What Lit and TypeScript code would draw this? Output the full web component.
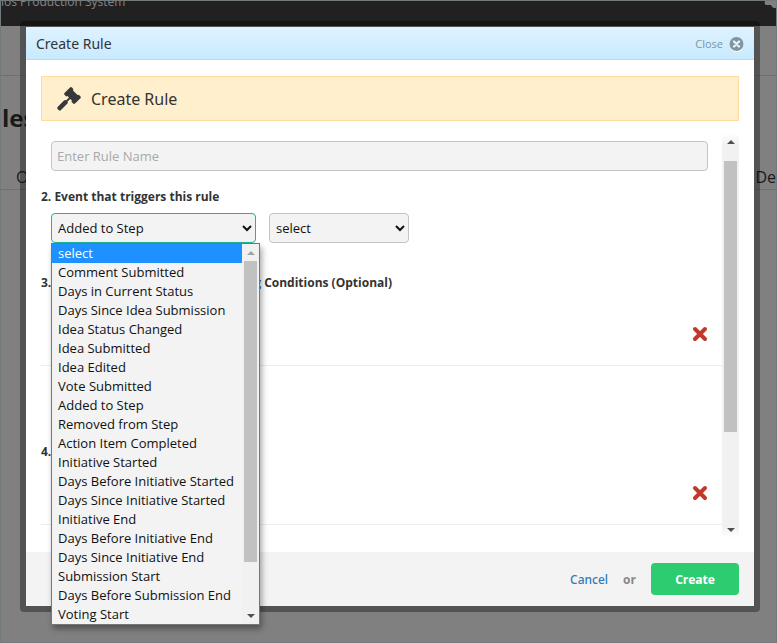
import { LitElement, html, css, svg } from "lit";
import { customElement, property, state } from "lit/decorators.js";
import { classMap } from "lit/directives/class-map.js";

const EVENTS = [
  "select",
  "Comment Submitted",
  "Days in Current Status",
  "Days Since Idea Submission",
  "Idea Status Changed",
  "Idea Submitted",
  "Idea Edited",
  "Vote Submitted",
  "Added to Step",
  "Removed from Step",
  "Action Item Completed",
  "Initiative Started",
  "Days Before Initiative Started",
  "Days Since Initiative Started",
  "Initiative End",
  "Days Before Initiative End",
  "Days Since Initiative End",
  "Submission Start",
  "Days Before Submission End",
  "Voting Start",
];

const arrowUp = svg`<path d="M0 4L4 0L8 4Z" fill="currentColor"/>`;
const arrowDown = svg`<path d="M0 0L4 4L8 0Z" fill="currentColor"/>`;

@customElement("scroll-rail")
export class ScrollRail extends LitElement {
  static styles = css`
    :host {
      display: flex;
      flex: none;
      flex-direction: column;
      align-items: center;
      box-sizing: border-box;
      width: 17px;
      background: #f1f1f1;
      color: #505050;
    }
    .end {
      display: flex;
      flex: none;
      align-items: center;
      justify-content: center;
      height: 17px;
    }
    .end.dim {
      color: #a3a3a3;
    }
    .track {
      flex: 1;
      width: 13px;
    }
    .thumb {
      background: #c1c1c1;
    }
    svg {
      display: block;
    }
  `;
  @property({ type: Number }) ratio = 1;
  @property({ type: Number }) offset = 0;
  @property({ type: Boolean }) atStart = false;

  render() {
    return html`
      <div class=${classMap({ end: true, dim: this.atStart })}>
        <svg width="8" height="4" viewBox="0 0 8 4">${arrowUp}</svg>
      </div>
      <div class="track">
        <div style="height:${this.offset * 100}%"></div>
        <div class="thumb" style="height:${this.ratio * 100}%"></div>
      </div>
      <div class="end">
        <svg width="8" height="4" viewBox="0 0 8 4">${arrowDown}</svg>
      </div>
    `;
  }
}

@customElement("app-root")
export class AppRoot extends LitElement {
  static styles = css`
    :host {
      display: block;
      position: relative;
      box-sizing: border-box;
      min-height: 100vh;
      overflow: hidden;
      border: 1px solid #737a7e;
      background: #808080;
      font-family: "Open Sans", "Noto Sans", sans-serif;
      font-size: 13px;
      color: #333;
    }
    * {
      box-sizing: border-box;
    }
    h1,
    h2,
    p,
    ul {
      margin: 0;
      padding: 0;
    }

    /* dimmed page behind the dialog */
    .topbar {
      display: flex;
      justify-content: space-between;
      height: 25px;
      overflow: hidden;
      background: #212121;
      color: #858585;
      font-size: 12px;
      font-weight: 500;
      line-height: 2px;
    }
    .topbar svg {
      display: block;
    }
    .strip {
      height: 50px;
      border-bottom: 1px solid #707070;
    }
    .title {
      height: 84px;
      padding-left: 1px;
      font-size: 24px;
      font-weight: 700;
      line-height: 84px;
      color: #1a1a1a;
    }
    .columns {
      display: flex;
      justify-content: space-between;
      height: 30px;
      padding-left: 15px;
      border-bottom: 1px solid #707070;
      font-size: 16px;
      line-height: 34px;
      color: #1a1a1a;
    }

    .overlay {
      position: absolute;
      inset: 0;
      padding: 20px 16px 0 19px;
    }
    .frame {
      padding: 6px;
      border-radius: 4px;
      background: rgba(0, 0, 0, 0.35);
    }
    .dialog {
      background: #fff;
    }
    .head {
      display: flex;
      align-items: center;
      justify-content: space-between;
      height: 33px;
      padding: 2px 10px 0;
      border-bottom: 1px solid #b5dbf0;
      background: linear-gradient(#dff2ff, #c8eaff);
    }
    .head h1 {
      font-family: "Noto Sans", "Open Sans", sans-serif;
      font-size: 14px;
      font-weight: 400;
      line-height: 20px;
    }
    button {
      padding: 0;
      border: 0;
      background: none;
      font: inherit;
      color: inherit;
    }
    .close {
      display: flex;
      align-items: center;
      gap: 6px;
      font-size: 11px;
      line-height: 16px;
      color: #80959f;
    }
    .body {
      display: flex;
      flex-direction: column;
      gap: 12px;
      padding: 16px 15px 14px;
    }
    .banner {
      display: flex;
      align-items: center;
      gap: 10px;
      height: 45px;
      padding: 0 15px;
      border: 1px solid #ffdc9c;
      background: #ffefcc;
      font-family: "Noto Sans", "Open Sans", sans-serif;
      font-size: 16px;
      line-height: 24px;
    }
    .scroller {
      display: flex;
    }
    .form {
      flex: 1;
      padding-top: 8px;
    }
    .name {
      display: block;
      width: calc(100% - 24px);
      height: 30px;
      margin-left: 10px;
      padding: 0 5px;
      border: 1px solid #c4c4c4;
      border-radius: 4px;
      background: #f3f3f3;
      font: inherit;
      color: #333;
    }
    .name::placeholder {
      color: #a9a9a9;
    }
    h2 {
      font-size: 12px;
      font-weight: 700;
      line-height: 18px;
    }
    h2 a {
      color: #1d5fb4;
      text-decoration: none;
    }
    .event {
      padding: 17px 0 31px;
    }
    .split {
      display: flex;
      justify-content: space-between;
      width: 351px;
    }
    .fields {
      display: flex;
      gap: 13px;
      padding: 7px 10px 0;
    }
    .drop {
      position: relative;
      width: 205px;
    }
    .short {
      width: 140px;
    }
    select {
      display: block;
      width: 100%;
      height: 30px;
      padding: 0 2px;
      border: 1px solid #c4c4c4;
      border-radius: 4px;
      outline: 0;
      background: #f3f3f3;
      font: inherit;
      color: #111;
    }
    .drop select {
      border-color: #1fb598;
    }
    .list {
      position: absolute;
      top: 30px;
      left: 0;
      z-index: 1;
      display: flex;
      width: 209px;
      border: 1px solid #767676;
      background: #f3f3f3;
      box-shadow: 2px 4px 6px rgba(0, 0, 0, 0.35);
    }
    .list ul {
      flex: 1;
      list-style: none;
    }
    .list li {
      padding-left: 6px;
      line-height: 19px;
      color: #111;
      white-space: nowrap;
    }
    .list li.on {
      background: #1e90ff;
      color: #fff;
    }
    .form-rail {
      background: linear-gradient(#fff, #f1f1f1 12px, #f1f1f1 calc(100% - 12px), #fff);
    }
    .rule {
      display: flex;
      align-items: flex-start;
      justify-content: flex-end;
      height: 74px;
      padding: 34px 14px 0 0;
      border-bottom: 1px solid #ededed;
    }
    .rule svg,
    .banner svg,
    .close svg {
      display: block;
    }
    .action {
      padding: 77px 0 13px;
    }
    .action .rule {
      height: 64px;
      padding-top: 24px;
    }
    .foot {
      display: flex;
      align-items: center;
      justify-content: flex-end;
      gap: 15px;
      height: 54px;
      padding: 0 15px;
      background: #f3f3f3;
      font-size: 12px;
      color: #888;
      font-weight: 700;
    }
    .foot a {
      font-family: "Noto Sans", "Open Sans", sans-serif;
      font-weight: 500;
      color: #337ab7;
      text-decoration: none;
    }
    .create {
      width: 88px;
      height: 32px;
      border-radius: 4px;
      background: #2ecc71;
      color: #fff;
      font-weight: 700;
    }
  `;

  @state() private highlighted = 0;

  private remove(label: string) {
    return html`<button type="button" aria-label=${label}>
      <svg width="16" height="16" viewBox="0 0 16 16">
        <path
          d="M3 3L13 13M13 3L3 13"
          stroke="#c0392b"
          stroke-width="4"
          stroke-linecap="round"
        />
      </svg>
    </button>`;
  }

  render() {
    return html`
      <div class="topbar">
        <span>ios Production System</span>
        <svg width="12" height="8" viewBox="0 0 12 8">
          <path d="M1 0H12V4H2Q0 3 1 0ZM7 4H12V7H10Q8 7 7 4Z" fill="#808080" />
        </svg>
      </div>
      <div class="strip"></div>
      <p class="title">les</p>
      <div class="columns"><span>O</span><span>De</span></div>

      <div class="overlay">
        <div class="frame">
          <div class="dialog" role="dialog" aria-labelledby="dialog-title">
            <header class="head">
              <h1 id="dialog-title">Create Rule</h1>
              <button class="close" type="button">
                Close
                <svg width="15" height="15" viewBox="0 0 15 15">
                  <circle cx="7.5" cy="8" r="7" fill="#fff" />
                  <circle cx="7.5" cy="7" r="7" fill="#80959f" />
                  <path d="M5 4.5L10 9.5M10 4.5L5 9.5" stroke="#e4f4ff" stroke-width="2.4" stroke-linecap="round" />
                </svg>
              </button>
            </header>
            <div class="body">
              <div class="banner">
                <svg width="24" height="24" viewBox="0 0 24 24" fill="#383838">
                  <path
                    d="M13 0.4Q14 -0.3 15 0.6L16 1.8Q16.6 2.8 16 3.6L20.5 8.1Q21.4 7.5 22.3 8.2L23.5 9.5Q24.2 10.5 23.4 11.3L18 16.6Q17 17.3 16.1 16.5L14.9 15.3Q14.2 14.4 14.9 13.5L13.3 11.9L10.5 14.6Q11.2 15.8 10.2 16.8L4 23Q2.8 24.2 1.5 23L0.7 22.1Q-0.3 20.9 0.8 19.7L7 13.5Q8.1 12.6 9.2 13.3L12 10.6L10.5 9.1Q9.6 9.8 8.7 9L7.5 7.8Q6.8 6.9 7.5 6Z"
                  />
                </svg>
                <span>Create Rule</span>
              </div>
              <div class="scroller">
                <form class="form">
                  <input class="name" type="text" placeholder="Enter Rule Name" aria-label="Enter Rule Name" />
                  <section class="event">
                    <h2><label for="event">2. Event that triggers this rule</label></h2>
                    <div class="fields">
                      <div class="drop">
                        <select id="event" aria-controls="event-list">
                          <option>Added to Step</option>
                        </select>
                        <div class="list">
                          <ul id="event-list" role="listbox" aria-label="Event">
                            ${EVENTS.map(
                              (name, i) => html`<li
                                role="option"
                                aria-selected=${i === this.highlighted}
                                class=${classMap({ on: i === this.highlighted })}
                                @mouseenter=${() => (this.highlighted = i)}
                              >
                                ${name}
                              </li>`
                            )}
                          </ul>
                          <scroll-rail .ratio=${0.87} .atStart=${true}></scroll-rail>
                        </div>
                      </div>
                      <div class="short">
                        <select aria-label="Step">
                          <option>select</option>
                        </select>
                      </div>
                    </div>
                  </section>
                  <section>
                    <h2 class="split">
                      <span>3.</span>
                      <span><a href="#conditions">Matching</a> Conditions (Optional)</span>
                    </h2>
                    <div class="rule">${this.remove("Remove condition")}</div>
                  </section>
                  <section class="action">
                    <h2>4.</h2>
                    <div class="rule">${this.remove("Remove action")}</div>
                  </section>
                </form>
                <scroll-rail class="form-rail" .offset=${0.03} .ratio=${0.73}></scroll-rail>
              </div>
            </div>
            <footer class="foot">
              <a href="#cancel">Cancel</a>
              <span>or</span>
              <button class="create" type="button">Create</button>
            </footer>
          </div>
        </div>
      </div>
    `;
  }
}
